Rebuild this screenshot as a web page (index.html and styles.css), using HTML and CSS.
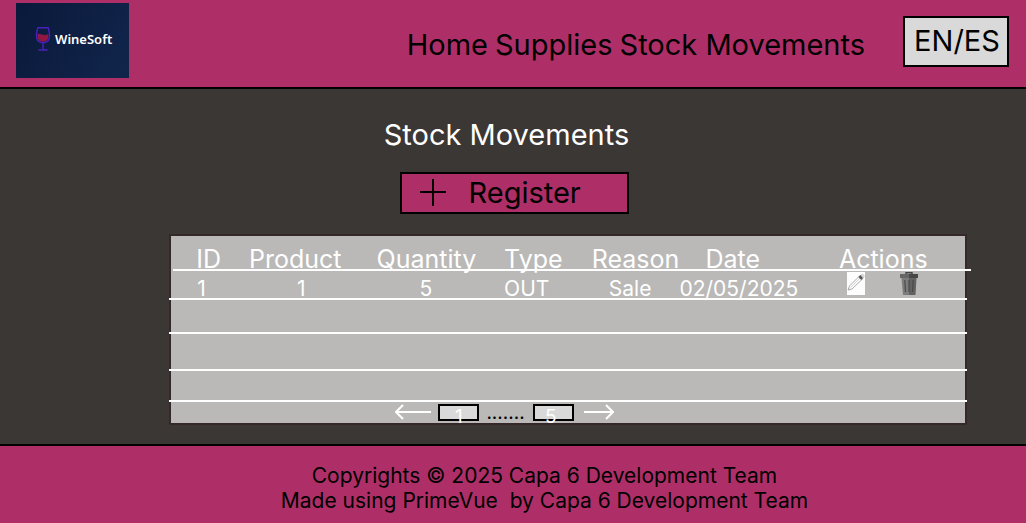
FILE: index.html
```html
<!DOCTYPE html>
<html lang="en">
<head>
<meta charset="utf-8">
<title>WineSoft - Stock Movements</title>
<link rel="stylesheet" href="styles.css">
</head>
<body>
<header class="topbar">
  <div class="logo">
    <svg class="logo-glass" viewBox="0 0 16 24" aria-hidden="true">
      <path d="M2.600 7.200 C5 5.200 7 9.500 13.300 7.300 C14 12 12 14.700 8 14.700 C4 14.700 2 12 2.600 7.200Z" fill="#8f1843"/>
      <path d="M2.800 .8H13.200C15.400 8.500 15.600 15.800 8 15.800S.6 8.500 2.800 .8ZM8 16V22.500M3.500 23H12.500" fill="none" stroke="#4a20bd" stroke-width="1.400"/>
    </svg>
    <span class="logo-name">WineSoft</span>
  </div>
  <nav class="nav">
    <a href="#">Home</a>
    <a href="#">Supplies</a>
    <a href="#">Stock Movements</a>
  </nav>
  <button class="lang" type="button">EN/ES</button>
</header>

<main class="content">
  <h1 class="title">Stock Movements</h1>
  <button class="register" type="button">
    <svg class="plus" viewBox="0 0 26 28" aria-hidden="true"><path d="M0 13H26M13 0V27" fill="none" stroke="#000" stroke-width="2"/></svg>
    <span>Register</span>
  </button>

  <section class="panel">
    <table class="movements">
      <colgroup>
        <col class="col-id"><col class="col-wide"><col class="col-wide"><col class="col-narrow"><col class="col-narrow"><col class="col-date"><col class="col-wide">
      </colgroup>
      <thead>
        <tr><th class="id">ID</th><th>Product</th><th>Quantity</th><th>Type</th><th>Reason</th><th class="date">Date</th><th>Actions</th></tr>
      </thead>
      <tbody>
        <tr class="row-data">
          <td class="id">1</td><td class="number">1</td><td class="quantity">5</td><td>OUT</td><td class="reason">Sale</td><td>02/05/2025</td>
          <td class="actions">
            <div class="action-list">
              <button class="icon-button" type="button" aria-label="Edit">
                <svg viewBox="0 0 18 23"><path d="M0 0H18V23H0Z" fill="#fdfdfd"/><path d="M1 18L2.500 14L13 3.500L16 6.500L5 17Z" fill="#fff" stroke="#888" stroke-width=".7"/><path d="M3.800 15.500L14 5M1 18L2.500 16.500" stroke="#aaa" stroke-width=".6"/><path d="M11.500 5L13.500 3L16 6L14.200 8Z" fill="#555"/><path d="M14 3L15.500 2L17.500 4.200L16 6Z" fill="#ddd" stroke="#999" stroke-width=".4"/></svg>
              </button>
              <button class="icon-button" type="button" aria-label="Delete">
                <svg viewBox="0 0 18 23"><path d="M6 2V.7H12V2" fill="none" stroke="#444" stroke-width="1.400"/><path d="M0 2H9V6H0Z" fill="#666"/><path d="M9 2H18V6H9Z" fill="#474747"/><path d="M1.500 6H9V23H3Z" fill="#7c7c7c"/><path d="M9 6H16.500L15.500 23H9Z" fill="#626262"/><path d="M4.800 8L5.500 20M9 8V20M13.200 8L12.500 20" stroke="#484848" stroke-width="1.100"/></svg>
              </button>
            </div>
          </td>
        </tr>
        <tr class="row-a"><td colspan="7"></td></tr>
        <tr class="row-b"><td colspan="7"></td></tr>
        <tr class="row-c"><td colspan="7"></td></tr>
      </tbody>
    </table>
    <nav class="pager" aria-label="Pages">
      <button class="arrow prev" type="button" aria-label="Previous page">
        <svg width="36" height="16" viewBox="0 0 36 16"><path d="M36 8H1M8 1L1 8L8 15" fill="none" stroke="#fff" stroke-width="2"/></svg>
      </button>
      <button class="page" type="button">1</button>
      <span class="dots">.......</span>
      <button class="page last" type="button">5</button>
      <button class="arrow next" type="button" aria-label="Next page">
        <svg width="30" height="16" viewBox="0 0 30 16"><path d="M0 8H29M22 1L29 8L22 15" fill="none" stroke="#fff" stroke-width="2"/></svg>
      </button>
    </nav>
  </section>
</main>

<footer class="footer">
  <p>Copyrights © 2025 Capa 6 Development Team</p>
  <p>Made using PrimeVue&nbsp; by Capa 6 Development Team</p>
</footer>
</body>
</html>
```
FILE: styles.css
```css
* { box-sizing: border-box; }

body {
  margin: 0;
  min-height: 100vh;
  display: flex;
  flex-direction: column;
  background: #3b3735;
  color: #000;
  font-family: Inter, "Liberation Sans", sans-serif;
  font-size: 29px;
  line-height: 36px;
}

button {
  margin: 0;
  padding: 0;
  color: inherit;
  font: inherit;
  border-radius: 0;
  cursor: pointer;
}

.topbar {
  display: flex;
  align-items: flex-start;
  padding: 3px 17px 9px 16px;
  background: #ae2f68;
  border-bottom: 2px solid #000;
}

.logo {
  display: flex;
  align-items: center;
  gap: 4px;
  width: 113px;
  height: 75px;
  padding: 0 0 3px 19px;
  background: linear-gradient(120deg, #0a193b, #11254b);
}

.logo-glass { width: 16px; height: 24px; }

.logo-name {
  color: #fff;
  font-family: "Noto Sans", sans-serif;
  font-size: 13px;
  font-weight: 600;
  line-height: 20px;
}

.nav {
  display: flex;
  gap: 7px;
  margin: 24px 38px 0 auto;
}

.nav a { color: inherit; text-decoration: none; }

.lang {
  margin-top: 13px;
  width: 106px;
  height: 51px;
  padding: 0 0 2px 2px;
  background: #d9d9d9;
  border: 2px solid #000;
}

.content {
  flex: 1;
  display: flex;
  flex-direction: column;
  align-items: center;
  padding: 28px 0 19px;
}

.title {
  margin: 0 13px 19px 0;
  color: #fff;
  font-size: 29px;
  font-weight: 400;
}

.register {
  display: flex;
  align-items: center;
  gap: 23px;
  width: 229px;
  height: 42px;
  margin-left: 2px;
  padding-left: 18px;
  background: #ae2f68;
  border: 2px solid #000;
}

.plus { width: 26px; height: 28px; }

.panel {
  align-self: stretch;
  margin: 20px 5.8% 0 16.5%;
  background: #bab9b7;
  border: 2px solid #35282a;
  color: #fff;
}

.movements {
  width: calc(100% + 4px);
  margin: 0 -2px;
  table-layout: fixed;
  border-spacing: 0;
  text-align: left;
  line-height: 20px;
}

.col-id { width: 10%; }
.col-wide { width: 16%; }
.col-narrow { width: 11%; }
.col-date { width: 20%; }

.movements thead { position: relative; }

.movements thead::after {
  content: "";
  position: absolute;
  inset: auto -4px 0 4px;
  height: 2px;
  background: #fff;
}

.movements th {
  height: 35px;
  padding: 13px 0 2px;
  font-size: 25px;
  font-weight: 400;
}

.movements td {
  padding: 0;
  border-bottom: 2px solid #fff;
  font-size: 21px;
}

.movements .row-data td {
  height: 29px;
  padding-top: 9px;
  line-height: 18px;
}

.movements .id { padding-left: 27px; }
.movements .date { padding-left: 26px; }
.movements .row-data .id { padding-left: 28px; }
.movements .row-data .number { padding-left: 48px; }
.movements .row-data .quantity { padding-left: 43px; }
.movements .row-data .reason { padding-left: 17px; }
.movements .row-data .actions { padding: 1px 0 0 8px; }

.row-a td { height: 34px; }
.row-b td { height: 37px; }
.row-c td { height: 31px; }

.action-list { display: flex; gap: 35px; height: 26px; }

.icon-button {
  width: 18px;
  height: 23px;
  background: none;
  border: 0;
}

.icon-button svg { display: block; width: 18px; height: 23px; }

.pager {
  display: flex;
  align-items: center;
  height: 21px;
  margin-left: 28%;
  padding-left: 2px;
  font-size: 19px;
}

.arrow { height: 18px; padding-bottom: 2px; background: none; border: 0; }
.arrow svg { display: block; }
.prev { margin-right: 7px; }
.next { margin-left: 10px; }

.page {
  width: 41px;
  height: 17px;
  padding-top: 8px;
  line-height: 5px;
  background: #d9d9d9;
  border: 2px solid #000;
}

.last { padding-right: 5px; }

.dots {
  margin: 0 8px 0 7px;
  color: #000;
  font-size: 19px;
  line-height: 20px;
}

.footer {
  padding: 17px 0 10px 63px;
  background: #ae2f68;
  border-top: 2px solid #000;
  font-size: 21px;
  line-height: 25px;
  text-align: center;
}

.footer p { margin: 0; }
```
